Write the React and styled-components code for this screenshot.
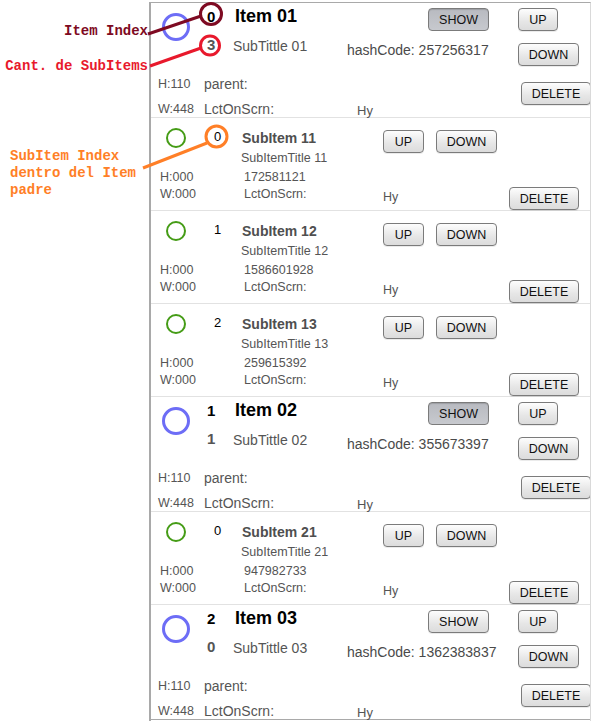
import React from "react";
import styled, { createGlobalStyle } from "styled-components";

const GlobalStyle = createGlobalStyle`
  html, body {
    margin: 0;
    padding: 0;
    background: #fff;
  }
  body {
    font-family: "Liberation Sans", Arial, sans-serif;
  }
`;

const Screen = styled.div`
  position: relative;
  width: 596px;
  height: 723px;
  display: flex;
  padding-top: 2px;
  box-sizing: border-box;
  overflow: hidden;
`;

const Gutter = styled.div`
  width: 149px;
  flex: none;
`;

const Panel = styled.div`
  width: 442px;
  height: 719px;
  flex: none;
  box-sizing: border-box;
  border-left: 2px solid #a9a9a9;
  border-top: 1px solid #a9a9a9;
  border-right: 1px solid #d9d9d9;
  overflow: hidden;

  & > div:last-child {
    border-bottom-color: #a9a9a9;
  }
`;

const ItemRow = styled.div`
  display: grid;
  grid-template-columns: 53px 31px 112px 10px 71px 90px 1fr;
  grid-template-rows: 30px 38px 25px 22px;
  height: 115px;
  box-sizing: border-box;
  border-bottom: 1px solid #e2e2e2;
  color: #555;
`;

const SubRow = styled.div`
  display: grid;
  grid-template-columns: 51px 39px 141px 53px 73px 1fr;
  grid-template-rows: 30px 20px 17px 25px;
  height: 93px;
  box-sizing: border-box;
  border-bottom: 1px solid #e2e2e2;
  color: #555;
`;

const Cell = styled.div`
  grid-column: ${(p) => p.$col};
  grid-row: ${(p) => p.$row};
  align-self: start;
  margin-top: ${(p) => p.$mt || 0}px;
  margin-left: ${(p) => p.$ml || 0}px;
  padding-left: ${(p) => p.$pl || 0}px;
  white-space: nowrap;
`;

const Ring = styled.div`
  grid-column: 1;
  grid-row: ${(p) => (p.$big ? "1 / 3" : "1")};
  align-self: start;
  margin-top: 10px;
  margin-left: ${(p) => (p.$big ? 11 : 15)}px;
  width: ${(p) => (p.$big ? 28 : 20)}px;
  height: ${(p) => (p.$big ? 28 : 20)}px;
  box-sizing: border-box;
  border-radius: 50%;
  border: ${(p) => (p.$big ? "3px solid #6d6df6" : "2px solid #459c16")};
`;

const ItemIndex = styled.span`
  font-size: 15px;
  font-weight: bold;
  line-height: 20px;
  color: #000;
`;

const CountText = styled.span`
  font-size: 15px;
  font-weight: bold;
  line-height: 20px;
  color: #555;
`;

const ItemTitle = styled.span`
  font-size: 18px;
  font-weight: bold;
  line-height: 22px;
  color: #000;
`;

const Text = styled.span`
  display: block;
  font-size: ${(p) => p.$size || 14}px;
  line-height: ${(p) => p.$lh || 20}px;
  font-weight: ${(p) => (p.$bold ? "bold" : "normal")};
  color: ${(p) => p.$color || "#555"};
`;

const Btn = styled.button`
  display: block;
  width: ${(p) => p.$w}px;
  height: 23px;
  padding: 0;
  box-sizing: border-box;
  border: 1px solid #7b7b7b;
  border-radius: 4px;
  background: ${(p) =>
    p.$pressed
      ? "linear-gradient(#b8bac0, #c7c9ce)"
      : "linear-gradient(#fdfdfd, #e6e6e6 60%, #dcdcdc)"};
  box-shadow: ${(p) => (p.$pressed ? "inset 0 1px 1px rgba(0,0,0,0.15)" : "0 1px 0 rgba(0,0,0,0.08)")};
  font-family: "Liberation Sans", Arial, sans-serif;
  font-size: 12.5px;
  color: #111;
`;

const Overlay = styled.div`
  position: absolute;
  inset: 0;
  pointer-events: none;
`;

const Lines = styled.svg`
  position: absolute;
  left: 0;
  top: 0;
`;

const Note = styled.div`
  position: absolute;
  top: ${(p) => p.$top}px;
  left: ${(p) => p.$left}px;
  width: ${(p) => p.$width}px;
  text-align: ${(p) => p.$align || "left"};
  font-family: "Liberation Mono", "DejaVu Sans Mono", monospace;
  font-size: 14px;
  font-weight: bold;
  line-height: 17px;
  color: ${(p) => p.$color};
  white-space: pre;
`;

const items = [
  {
    index: 0,
    title: "Item 01",
    count: 3,
    subtitle: "SubTittle 01",
    hash: "257256317",
    pressed: true,
    subs: [
      { idx: 0, title: "SubItem 11", subtitle: "SubItemTitle 11", hash: "172581121" },
      { idx: 1, title: "SubItem 12", subtitle: "SubItemTitle 12", hash: "1586601928" },
      { idx: 2, title: "SubItem 13", subtitle: "SubItemTitle 13", hash: "259615392" },
    ],
  },
  {
    index: 1,
    title: "Item 02",
    count: 1,
    subtitle: "SubTittle 02",
    hash: "355673397",
    pressed: true,
    subs: [{ idx: 0, title: "SubItem 21", subtitle: "SubItemTitle 21", hash: "947982733" }],
  },
  {
    index: 2,
    title: "Item 03",
    count: 0,
    subtitle: "SubTittle 03",
    hash: "1362383837",
    pressed: false,
    subs: [],
  },
];

function Item({ item }) {
  return (
    <ItemRow>
      <Ring $big />
      <Cell $col="2" $row="1" $mt={4} $pl={3}>
        <ItemIndex>{item.index}</ItemIndex>
      </Cell>
      <Cell $col="3 / 6" $row="1" $mt={2}>
        <ItemTitle>{item.title}</ItemTitle>
      </Cell>
      <Cell $col="6" $row="1" $mt={5}>
        <Btn $w={61} $pressed={item.pressed}>SHOW</Btn>
      </Cell>
      <Cell $col="7" $row="1" $mt={5}>
        <Btn $w={40}>UP</Btn>
      </Cell>

      <Cell $col="2" $row="2" $mt={2} $pl={3}>
        <CountText>{item.count}</CountText>
      </Cell>
      <Cell $col="3" $row="2" $mt={3} $ml={-2}>
        <Text>{item.subtitle}</Text>
      </Cell>
      <Cell $col="4 / 7" $row="2" $mt={7}>
        <Text $color="#4a4a4a">hashCode: {item.hash}</Text>
      </Cell>
      <Cell $col="7" $row="2" $mt={10}>
        <Btn $w={61}>DOWN</Btn>
      </Cell>

      <Cell $col="1" $row="3" $mt={5} $pl={7}>
        <Text $size={12.5} $lh={16}>H:110</Text>
      </Cell>
      <Cell $col="2 / 7" $row="3" $mt={4}>
        <Text $lh={18}>parent:</Text>
      </Cell>
      <Cell $col="7" $row="3 / 5" $mt={11} $pl={3}>
        <Btn $w={70}>DELETE</Btn>
      </Cell>

      <Cell $col="1" $row="4" $mt={5} $pl={7}>
        <Text $size={12.5} $lh={16}>W:448</Text>
      </Cell>
      <Cell $col="2 / 5" $row="4" $mt={4}>
        <Text $lh={18}>LctOnScrn:</Text>
      </Cell>
      <Cell $col="5" $row="4" $mt={6}>
        <Text $size={13} $lh={18}>Hy</Text>
      </Cell>
    </ItemRow>
  );
}

function SubItem({ sub }) {
  return (
    <SubRow>
      <Ring />
      <Cell $col="2" $row="1" $mt={11} $pl={12}>
        <Text $size={13} $lh={16} $color="#000">{sub.idx}</Text>
      </Cell>
      <Cell $col="3" $row="1" $mt={11} $pl={1}>
        <Text $size={14} $lh={18} $bold $color="#4f4f4f">{sub.title}</Text>
      </Cell>
      <Cell $col="4" $row="1" $mt={12} $pl={1}>
        <Btn $w={41}>UP</Btn>
      </Cell>
      <Cell $col="5" $row="1" $mt={12} $pl={1}>
        <Btn $w={61}>DOWN</Btn>
      </Cell>

      <Cell $col="3" $row="2" $mt={2}>
        <Text $size={12.5} $lh={16}>{sub.subtitle}</Text>
      </Cell>

      <Cell $col="1" $row="3" $mt={1} $pl={9}>
        <Text $size={12.5} $lh={16}>H:000</Text>
      </Cell>
      <Cell $col="3" $row="3" $mt={1} $pl={3}>
        <Text $size={12.5} $lh={16}>{sub.hash}</Text>
      </Cell>

      <Cell $col="1" $row="4" $mt={1} $pl={9}>
        <Text $size={12.5} $lh={16}>W:000</Text>
      </Cell>
      <Cell $col="3" $row="4" $mt={1} $pl={3}>
        <Text $size={12.5} $lh={16}>LctOnScrn:</Text>
      </Cell>
      <Cell $col="4" $row="4" $mt={4} $pl={1}>
        <Text $size={12.5} $lh={16}>Hy</Text>
      </Cell>
      <Cell $col="6" $row="4" $mt={2} $pl={1}>
        <Btn $w={70}>DELETE</Btn>
      </Cell>
    </SubRow>
  );
}

function Annotations() {
  return (
    <Overlay>
      <Lines width="596" height="723">
        <line x1="148" y1="34" x2="201" y2="16" stroke="#7e0a22" strokeWidth="3" />
        <circle cx="211" cy="14" r="10.5" fill="none" stroke="#7e0a22" strokeWidth="3" />
        <line x1="150" y1="66" x2="201" y2="48" stroke="#e8192c" strokeWidth="3" />
        <circle cx="210" cy="45.5" r="9.5" fill="none" stroke="#e8192c" strokeWidth="3" />
        <line x1="143" y1="168" x2="207" y2="143" stroke="#ff7f27" strokeWidth="3" />
        <circle cx="216.5" cy="136.5" r="10.5" fill="none" stroke="#ff7f27" strokeWidth="3" />
      </Lines>
      <Note $top={23} $left={0} $width={148} $align="right" $color="#7e0a22">
        Item Index
      </Note>
      <Note $top={58} $left={0} $width={148} $align="right" $color="#e8192c">
        Cant. de SubItems
      </Note>
      <Note $top={148} $left={10} $width={130} $color="#ff7f27">
        {"SubItem Index\ndentro del Item\npadre"}
      </Note>
    </Overlay>
  );
}

export default function App() {
  return (
    <>
      <GlobalStyle />
      <Screen>
        <Gutter />
        <Panel>
          {items.map((item) => (
            <React.Fragment key={item.title}>
              <Item item={item} />
              {item.subs.map((sub) => (
                <SubItem key={sub.title} sub={sub} />
              ))}
            </React.Fragment>
          ))}
        </Panel>
        <Annotations />
      </Screen>
    </>
  );
}
